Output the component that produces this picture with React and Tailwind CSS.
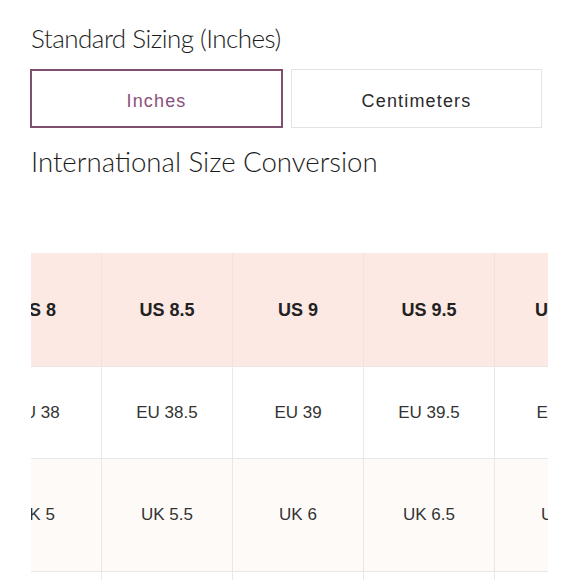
const sizes = [
    { us: 'US 8', eu: 'EU 38', uk: 'UK 5' },
    { us: 'US 8.5', eu: 'EU 38.5', uk: 'UK 5.5' },
    { us: 'US 9', eu: 'EU 39', uk: 'UK 6' },
    { us: 'US 9.5', eu: 'EU 39.5', uk: 'UK 6.5' },
    { us: 'US 10', eu: 'EU 40', uk: 'UK 7' },
]

export default function App() {
    return (
        <div className="w-[580px] h-[580px] overflow-hidden bg-white pl-[31px] pr-[32px] text-[#333]" style={{ fontFamily: '"Liberation Sans", Arial, sans-serif' }}>
            <h2 className="pt-[23px] text-[26px] leading-[30px] tracking-[-0.02em] font-light text-[#1c1c1c]" style={{ fontFamily: 'Lato, "Open Sans", sans-serif' }}>
                Standard Sizing (Inches)
            </h2>
            <div className="mt-[16px] flex gap-[8px] -ml-[1px] w-[512px]">
                <button className="flex-1 h-[59px] pt-[5px] border-2 border-[#7f4f70] text-[18px] tracking-[0.065em] text-[#8b5079]">
                    Inches
                </button>
                <button className="flex-1 h-[59px] pt-[5px] border border-[#e4e2e2] text-[18px] tracking-[0.065em] text-[#2a2a2a]">
                    Centimeters
                </button>
            </div>
            <h2 className="mt-[17px] text-[27.6px] leading-[34px] font-light text-[#1c1c1c]" style={{ fontFamily: 'Lato, "Open Sans", sans-serif' }}>
                International Size Conversion
            </h2>
            <div className="mt-[74px] w-[517px] overflow-hidden">
                <div className="-ml-[60px] flex flex-col w-max">
                    <div className="flex h-[114px] bg-[#fce9e4] border-b border-[#ede7e4]">
                        {sizes.map((s, i) => (
                            <div key={i} className="w-[131px] flex items-center justify-center pt-[2px] border-r border-[#efe3df] text-[18px] font-bold text-[#222]">
                                {s.us}
                            </div>
                        ))}
                    </div>
                    <div className="flex h-[92px] bg-white border-b border-[#ebe7e5]">
                        {sizes.map((s, i) => (
                            <div key={i} className="w-[131px] flex items-center justify-center border-r border-[#ebe7e5] text-[17px] text-[#333]">
                                {s.eu}
                            </div>
                        ))}
                    </div>
                    <div className="flex h-[113px] bg-[#fefaf8] border-b border-[#ebe7e5]">
                        {sizes.map((s, i) => (
                            <div key={i} className="w-[131px] flex items-center justify-center border-r border-[#ebe7e5] text-[17px] text-[#333]">
                                {s.uk}
                            </div>
                        ))}
                    </div>
                    <div className="flex h-[92px] bg-white">
                        {sizes.map((s, i) => (
                            <div key={i} className="w-[131px] border-r border-[#ebe7e5]" />
                        ))}
                    </div>
                </div>
            </div>
        </div>
    )
}
